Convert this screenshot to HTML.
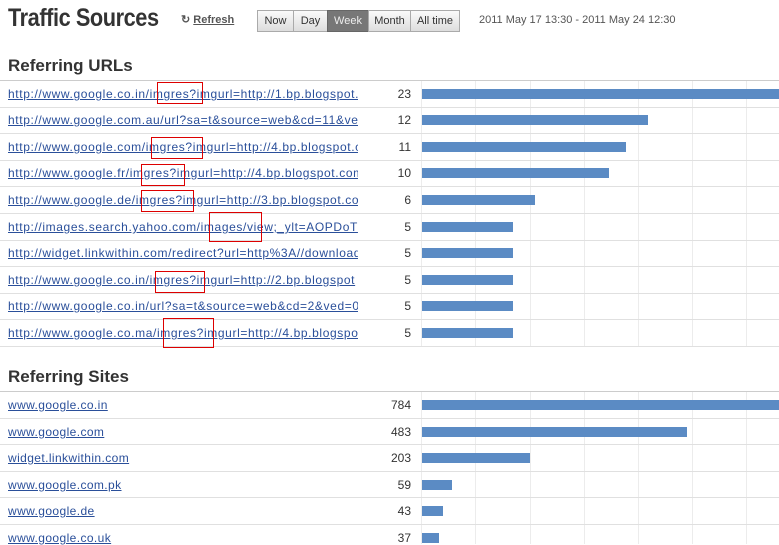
<!DOCTYPE html><html><head><style>
body{margin:0;width:779px;height:544px;overflow:hidden;background:#fff;font-family:"Liberation Sans",sans-serif;position:relative}
.a{position:absolute}
h1{position:absolute;left:8px;top:4px;margin:0;font-size:25px;font-weight:bold;color:#333;letter-spacing:-0.5px;transform:scaleX(0.87);transform-origin:left top}
h2{position:absolute;left:8px;margin:0;font-size:17px;font-weight:bold;color:#333}
.btn{position:absolute;top:10px;height:20px;border:1px solid #aaa;background:linear-gradient(#fafafa,#ddd);font-size:11px;line-height:20px;text-align:center;color:#333}
.l{position:absolute;left:8px;width:350px;overflow:hidden;white-space:nowrap;font-size:12px;color:#2a4f9a;text-decoration:underline;letter-spacing:0.62px}
.s{letter-spacing:0.4px}
.n{position:absolute;width:60px;left:351px;text-align:right;font-size:12px;color:#333}
.bar{position:absolute;left:422px;height:10px;background:#5b8bc4}
.hl{position:absolute;left:0;width:779px;height:1px;background:#e0e0e0}
.vl{position:absolute;width:1px;background:#ececec}
.rb{position:absolute;border:1px solid #d00}
</style></head><body>
<h1>Traffic Sources</h1>
<div class="a" style="left:181px;top:13px;font-size:11px;font-weight:bold;color:#555">&#8635; <u>Refresh</u></div>
<div class="btn" style="left:257px;width:35px">Now</div>
<div class="btn" style="left:293px;width:33px">Day</div>
<div class="btn" style="left:327px;width:40px;background:#777;color:#eee;border-color:#666">Week</div>
<div class="btn" style="left:368px;width:41px">Month</div>
<div class="btn" style="left:410px;width:48px">All time</div>
<div class="a" style="left:479px;top:14px;font-size:11px;color:#555">2011 May 17 13:30 - 2011 May 24 12:30</div>
<h2 style="top:56px">Referring URLs</h2>
<h2 style="top:367px">Referring Sites</h2>
<div class="vl" style="left:421px;top:80px;height:266px"></div>
<div class="vl" style="left:475px;top:80px;height:266px"></div><div class="vl" style="left:530px;top:80px;height:266px"></div><div class="vl" style="left:584px;top:80px;height:266px"></div><div class="vl" style="left:638px;top:80px;height:266px"></div><div class="vl" style="left:692px;top:80px;height:266px"></div><div class="vl" style="left:746px;top:80px;height:266px"></div>
<div class="vl" style="left:421px;top:391px;height:153px"></div>
<div class="vl" style="left:475px;top:391px;height:153px"></div><div class="vl" style="left:530px;top:391px;height:153px"></div><div class="vl" style="left:584px;top:391px;height:153px"></div><div class="vl" style="left:638px;top:391px;height:153px"></div><div class="vl" style="left:692px;top:391px;height:153px"></div><div class="vl" style="left:746px;top:391px;height:153px"></div>
<div class="hl" style="top:80px;background:#ccc"></div><div class="hl" style="top:107px"></div><div class="hl" style="top:133px"></div><div class="hl" style="top:160px"></div><div class="hl" style="top:186px"></div><div class="hl" style="top:213px"></div><div class="hl" style="top:240px"></div><div class="hl" style="top:266px"></div><div class="hl" style="top:293px"></div><div class="hl" style="top:319px"></div><div class="hl" style="top:346px"></div>
<div class="hl" style="top:391px;background:#ccc"></div><div class="hl" style="top:418px"></div><div class="hl" style="top:444px"></div><div class="hl" style="top:471px"></div><div class="hl" style="top:497px"></div><div class="hl" style="top:524px"></div>

<div class="l" style="top:87px">http://www.google.co.in/imgres?imgurl=http://1.bp.blogspot.com</div><div class="n" style="top:87px">23</div><div class="bar" style="top:89px;width:357px"></div>
<div class="l" style="top:113px">http://www.google.com.au/url?sa=t&amp;source=web&amp;cd=11&amp;ved</div><div class="n" style="top:113px">12</div><div class="bar" style="top:115px;width:226px"></div>
<div class="l" style="top:140px">http://www.google.com/imgres?imgurl=http://4.bp.blogspot.com</div><div class="n" style="top:140px">11</div><div class="bar" style="top:142px;width:204px"></div>
<div class="l" style="top:166px">http://www.google.fr/imgres?imgurl=http://4.bp.blogspot.com</div><div class="n" style="top:166px">10</div><div class="bar" style="top:168px;width:187px"></div>
<div class="l" style="top:193px">http://www.google.de/imgres?imgurl=http://3.bp.blogspot.com</div><div class="n" style="top:193px">6</div><div class="bar" style="top:195px;width:113px"></div>
<div class="l" style="top:220px">http://images.search.yahoo.com/images/view;_ylt=AOPDoT</div><div class="n" style="top:220px">5</div><div class="bar" style="top:222px;width:91px"></div>
<div class="l" style="top:246px">http://widget.linkwithin.com/redirect?url=http%3A//download</div><div class="n" style="top:246px">5</div><div class="bar" style="top:248px;width:91px"></div>
<div class="l" style="top:273px">http://www.google.co.in/imgres?imgurl=http://2.bp.blogspot</div><div class="n" style="top:273px">5</div><div class="bar" style="top:275px;width:91px"></div>
<div class="l" style="top:299px">http://www.google.co.in/url?sa=t&amp;source=web&amp;cd=2&amp;ved=0</div><div class="n" style="top:299px">5</div><div class="bar" style="top:301px;width:91px"></div>
<div class="l" style="top:326px">http://www.google.co.ma/imgres?imgurl=http://4.bp.blogspot</div><div class="n" style="top:326px">5</div><div class="bar" style="top:328px;width:91px"></div>

<div class="rb" style="left:157px;top:82px;width:44px;height:20px"></div>
<div class="rb" style="left:151px;top:137px;width:50px;height:20px"></div>
<div class="rb" style="left:141px;top:164px;width:42px;height:20px"></div>
<div class="rb" style="left:141px;top:190px;width:51px;height:20px"></div>
<div class="rb" style="left:209px;top:212px;width:51px;height:28px"></div>
<div class="rb" style="left:155px;top:271px;width:48px;height:20px"></div>
<div class="rb" style="left:163px;top:318px;width:49px;height:28px"></div>

<div class="l s" style="top:398px">www.google.co.in</div><div class="n" style="top:398px">784</div><div class="bar" style="top:400px;width:357px"></div>
<div class="l s" style="top:425px">www.google.com</div><div class="n" style="top:425px">483</div><div class="bar" style="top:427px;width:265px"></div>
<div class="l s" style="top:451px">widget.linkwithin.com</div><div class="n" style="top:451px">203</div><div class="bar" style="top:453px;width:108px"></div>
<div class="l s" style="top:478px">www.google.com.pk</div><div class="n" style="top:478px">59</div><div class="bar" style="top:480px;width:30px"></div>
<div class="l s" style="top:504px">www.google.de</div><div class="n" style="top:504px">43</div><div class="bar" style="top:506px;width:21px"></div>
<div class="l s" style="top:531px">www.google.co.uk</div><div class="n" style="top:531px">37</div><div class="bar" style="top:533px;width:17px"></div>
</body></html>
